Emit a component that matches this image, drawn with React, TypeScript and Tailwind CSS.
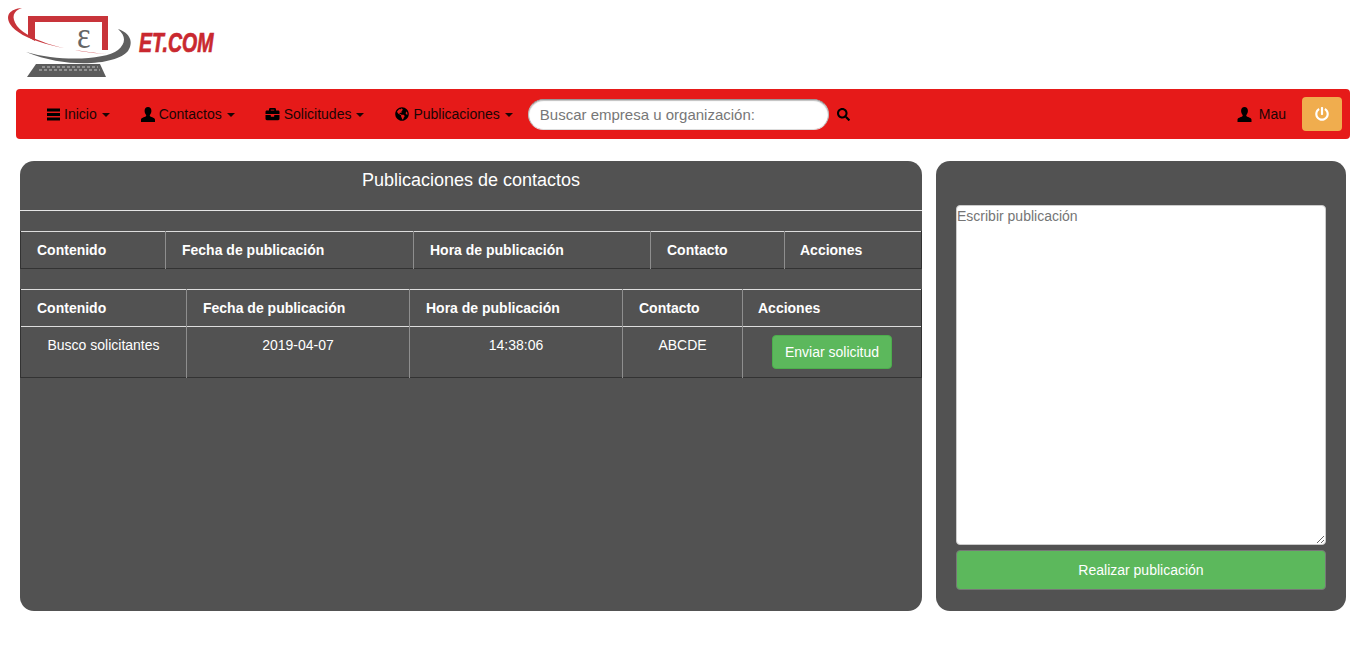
import React from "react";
import { FaBriefcase, FaGlobeAmericas, FaSearch, FaPowerOff } from "react-icons/fa";

const User = ({ className = "" }: { className?: string }) => (
  <svg viewBox="1 0.5 14 15" className={className} fill="currentColor">
    <path d="M8 0.5C5.9 0.5 4.6 2 4.6 4.2c0 1.6.6 3.2 1.5 4.2.3.4.2 1-.2 1.3C4.3 10.8 1 11.3 1 13.2V15.5h14v-2.3c0-1.9-3.3-2.4-4.9-3.5-.4-.3-.5-.9-.2-1.3.9-1 1.5-2.6 1.5-4.2C11.4 2 10.1.5 8 .5z" />
  </svg>
);

const Bars = () => (
  <svg viewBox="0 0 13 13" className="w-[13px] h-[13px]" fill="currentColor">
    <rect x="0" y="0.5" width="13" height="3" />
    <rect x="0" y="5" width="13" height="3" />
    <rect x="0" y="9.5" width="13" height="3" />
  </svg>
);

const Caret = () => (
  <span className="ml-[5px] inline-block w-0 h-0 border-t-[4px] border-x-[4px] border-x-transparent border-t-[#1a0505] mt-[1px]" />
);

const NavLink = ({ icon, label, pad = "pr-[15px]" }: { icon: React.ReactNode; label: string; pad?: string }) => (
  <a className={`flex items-center pl-[15px] ${pad} h-[50px] text-[14px] text-[#1a0505]`}>
    <span className="text-black flex items-center mr-[4px]">{icon}</span>
    <span>{label}</span>
    <Caret />
  </a>
);

const Logo = () => (
  <svg viewBox="0 0 225 89" className="block w-[225px] h-[89px]">
    <path d="M22 8C10 9 5 15 10 24 20 40 60 50 108 54 70 52 30 42 17 26 11 17 13 11 22 8z" fill="#c8343a" />
    <path d="M28 16H108V50L102 50V22H35V41L28 37z" fill="#c8343a" />
    <text transform="translate(77 48) scale(0.85 1)" fontFamily="'Liberation Serif', serif" fontSize="38" fill="#666">ε</text>
    <path d="M118 29C130 33 134 42 128 51 118 64 70 70 26 52 60 62 105 60 118 50 126 43 126 36 118 29z" fill="#5f5f5f" />
    <path d="M36 64L100 64L106 77H27z" fill="#5c5c5c" />
    <path d="M42 67H98M39 70H100" stroke="#c4c4c4" strokeWidth="1.2" strokeDasharray="3 2" />
    <text transform="translate(139 52) scale(0.75 1.05)" fontFamily="'Liberation Sans', sans-serif" fontWeight="700" fontStyle="italic" fontSize="26" fill="#c9282f" stroke="#c9282f" strokeWidth="0.7">ET.COM</text>
  </svg>
);

const Th = ({ children, className = "" }: { children: React.ReactNode; className?: string }) => (
  <th className={`text-left font-bold text-[14px] text-white align-middle p-0 border-l border-l-[#8e8e8e] first:border-l-[#333] last:border-r last:border-r-[#333] ${className}`}>
    {children}
  </th>
);

const Td = ({ children, className = "" }: { children: React.ReactNode; className?: string }) => (
  <td className={`text-center text-[14px] text-white align-top p-0 border-l border-l-[#8e8e8e] first:border-l-[#333] last:border-r last:border-r-[#333] ${className}`}>
    {children}
  </td>
);

export default function App() {
  return (
    <div className="w-[1367px] h-[660px] bg-white overflow-hidden font-['Liberation_Sans',Arial,sans-serif]">
      <div className="h-[89px]">
        <Logo />
      </div>

      <nav className="ml-[16px] w-[1334px] h-[50px] bg-[#e61a19] rounded-[4px] flex items-center pl-[16px] pr-[8px]">
        <NavLink icon={<Bars />} label="Inicio" pad="pr-[16px]" />
        <NavLink icon={<User className="w-[14px] h-[15px]" />} label="Contactos" />
        <NavLink icon={<FaBriefcase className="w-[15px] h-[14px]" />} label="Solicitudes" pad="pr-[16px]" />
        <NavLink icon={<FaGlobeAmericas className="w-[14px] h-[14px]" />} label="Publicaciones" />
        <input
          placeholder="Buscar empresa u organización:"
          className="w-[301px] h-[31px] bg-white rounded-[16px] px-[11px] text-[15px] text-[#555] placeholder:text-[#777] outline-none border border-[#ddd] border-t-[#999] border-l-[#bbb] border-r-[#bbb] shadow-[inset_0_1px_1px_rgba(0,0,0,0.25)]"
        />
        <FaSearch className="ml-[8px] w-[13px] h-[13px] text-black" />
        <div className="ml-auto flex items-center">
          <User className="w-[15px] h-[15px] text-black" />
          <span className="ml-[7px] mr-[1px] text-[14px] text-[#1a0505]">Mau</span>
          <button className="ml-[15px] w-[40px] h-[34px] bg-[#f0ad4e] rounded-[4px] flex items-center justify-center text-white">
            <FaPowerOff className="w-[14px] h-[14px]" />
          </button>
        </div>
      </nav>

      <div className="flex mt-[22px] ml-[20px] gap-[14px] items-start">
        <section className="w-[902px] h-[450px] bg-[#525252] rounded-[14px] overflow-hidden">
          <h2 className="h-[49px] pt-[9px] text-center text-[18px] leading-[20px] text-white font-normal">
            Publicaciones de contactos
          </h2>
          <div className="h-px bg-[#e5e5e5]" />
          <div className="h-[20px]" />
          <table className="w-[901px] table-fixed border-collapse">
            <colgroup>
              <col className="w-[145px]" />
              <col className="w-[248px]" />
              <col className="w-[237px]" />
              <col className="w-[134px]" />
              <col className="w-[137px]" />
            </colgroup>
            <thead>
              <tr className="h-[37px] border-t border-t-[#ddd] border-b border-b-[#333]">
                <Th className="pl-[16px]">Contenido</Th>
                <Th className="pl-[16px]">Fecha de publicación</Th>
                <Th className="pl-[16px]">Hora de publicación</Th>
                <Th className="pl-[16px]">Contacto</Th>
                <Th className="pl-[15px]">Acciones</Th>
              </tr>
            </thead>
          </table>
          <div className="h-[20px]" />
          <table className="w-[901px] table-fixed border-collapse">
            <colgroup>
              <col className="w-[166px]" />
              <col className="w-[223px]" />
              <col className="w-[213px]" />
              <col className="w-[120px]" />
              <col className="w-[179px]" />
            </colgroup>
            <thead>
              <tr className="h-[37px] border-t border-t-[#ddd] border-b border-b-[#ddd]">
                <Th className="pl-[16px]">Contenido</Th>
                <Th className="pl-[16px]">Fecha de publicación</Th>
                <Th className="pl-[16px]">Hora de publicación</Th>
                <Th className="pl-[16px]">Contacto</Th>
                <Th className="pl-[15px]">Acciones</Th>
              </tr>
            </thead>
            <tbody>
              <tr className="h-[51px] border-b border-b-[#333]">
                <Td className="pt-[8px]">Busco solicitantes</Td>
                <Td className="pt-[8px]">2019-04-07</Td>
                <Td className="pt-[8px]">14:38:06</Td>
                <Td className="pt-[8px]">ABCDE</Td>
                <Td className="pt-[8px]">
                  <button className="w-[120px] h-[34px] bg-[#5cb85c] border border-[#4cae4c] rounded-[4px] text-white text-[14px]">
                    Enviar solicitud
                  </button>
                </Td>
              </tr>
            </tbody>
          </table>
        </section>

        <section className="w-[410px] h-[450px] bg-[#525252] rounded-[14px] px-[20px] pt-[44px]">
          <textarea
            placeholder="Escribir publicación"
            className="block w-[370px] h-[340px] bg-white rounded-[4px] border border-[#ccc] p-0 text-[14px] leading-[20px] text-[#555] placeholder:text-[#757575] outline-none resize-y"
          />
          <button className="mt-[5px] w-[370px] h-[40px] bg-[#5cb85c] border border-[#777] rounded-[4px] text-white text-[14px]">
            Realizar publicación
          </button>
        </section>
      </div>
    </div>
  );
}
